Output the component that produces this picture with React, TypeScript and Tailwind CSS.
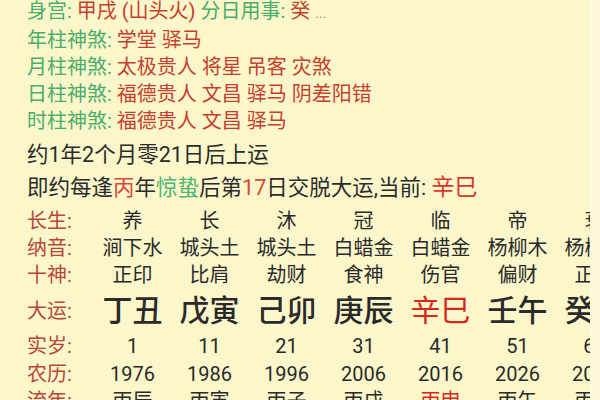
const green = 'text-[#49ad6c]';
const red = 'text-[#c4402f]';

const shensha = [
  { label: '年柱神煞:', value: '学堂 驿马' },
  { label: '月柱神煞:', value: '太极贵人 将星 吊客 灾煞' },
  { label: '日柱神煞:', value: '福德贵人 文昌 驿马 阴差阳错' },
  { label: '时柱神煞:', value: '福德贵人 文昌 驿马' },
];

type Row = { label: string; cells: string[]; h: string; cell: string };

const rows: Row[] = [
  { label: '长生:', cells: ['养', '长', '沐', '冠', '临', '帝', '衰'], h: 'h-[27px]', cell: 'text-[20px]' },
  { label: '纳音:', cells: ['涧下水', '城头土', '城头土', '白蜡金', '白蜡金', '杨柳木', '杨柳木'], h: 'h-[27px]', cell: 'text-[20px]' },
  { label: '十神:', cells: ['正印', '比肩', '劫财', '食神', '伤官', '偏财', '正官'], h: 'h-[28px]', cell: 'text-[20px]' },
  { label: '大运:', cells: ['丁丑', '戊寅', '己卯', '庚辰', '辛巳', '壬午', '癸未'], h: 'h-[43px]', cell: 'text-[30px] font-medium' },
  { label: '实岁:', cells: ['1', '11', '21', '31', '41', '51', '61'], h: 'h-[28px]', cell: 'text-[20px]' },
  { label: '农历:', cells: ['1976', '1986', '1996', '2006', '2016', '2026', '2036'], h: 'h-[27px]', cell: 'text-[20px]' },
  { label: '流年:', cells: ['丙辰', '丙寅', '丙子', '丙戌', '丙申', '丙午', '丙辰'], h: 'h-[27px]', cell: 'text-[20px]' },
];

export default function App() {
  return (
    <div
      className="flex w-[600px] h-[400px] overflow-hidden bg-[#fdfadb]"
      style={{ fontFamily: 'Roboto, "Noto Sans CJK SC", sans-serif' }}
    >
      <div className="w-[590px] h-[400px] overflow-hidden bg-[#fcf7ca] pl-[27px] flex flex-col">
        <div className="mt-[-2px] text-[20px] leading-[27px] whitespace-nowrap">
          <div>
            <span className={green}>身宫: </span>
            <span className={red}>甲戌 (山头火) </span>
            <span className={green}>分日用事: </span>
            <span className={red}>癸 </span>
            <span className="text-[#c48070] text-[14px]">...</span>
          </div>
          {shensha.map((s) => (
            <div key={s.label}>
              <span className={green}>{s.label} </span>
              <span className={red}>{s.value}</span>
            </div>
          ))}
        </div>

        <div className="mt-[3px] text-[21.5px] leading-[33px] text-[#2b2b2b] whitespace-nowrap">
          <div>约1年2个月零21日后上运</div>
          <div>
            即约每逢<span className="text-[#d9493a]">丙</span>年
            <span className="text-[#4fb574]">惊蛰</span>后第<span className="text-[#d9493a]">17</span>
            日交脱大运,当前: <span className="text-[#d23a2c] text-[23px]">辛巳</span>
          </div>
        </div>

        <div className="mt-[3px] flex flex-col">
          {rows.map((r) => (
            <div key={r.label} className={`flex items-center whitespace-nowrap ${r.h}`}>
              <div className="w-[67px] shrink-0 text-[20px] text-[#b6473a]">{r.label}</div>
              {r.cells.map((c, i) => (
                <div
                  key={i}
                  className={`w-[77px] shrink-0 text-center ${r.cell} ${
                    r.label === '大运:' && i === 4
                      ? 'text-[#d8281e] font-normal'
                      : r.label === '流年:' && i === 4
                        ? 'text-[#d8281e]'
                        : 'text-[#2a2a2a]'
                  }`}
                >
                  {c}
                </div>
              ))}
            </div>
          ))}
        </div>
      </div>
      <div className="flex-1" />
    </div>
  );
}
